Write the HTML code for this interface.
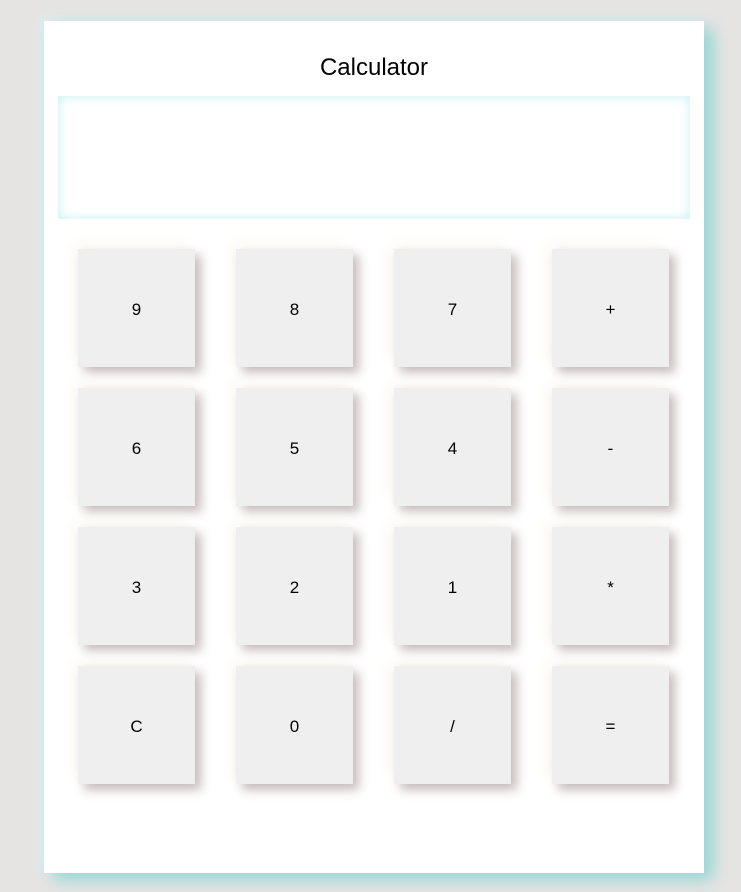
<!DOCTYPE html>
<html><head><meta charset="utf-8"><style>
body{margin:0;width:741px;height:892px;background:#e6e4e3;font-family:"Comic Sans MS","Liberation Sans",sans-serif;overflow:hidden;position:relative}
.card{position:absolute;left:44px;top:21px;width:660px;height:852px;background:#fff;box-shadow:9px 7px 16px #93d6d4,-4px -2px 10px #dcefef}
h1{position:absolute;left:0;right:0;top:31px;margin:0;text-align:center;font-size:24px;font-weight:normal;line-height:32px;color:#000}
.disp{position:absolute;left:14px;top:75px;width:632px;height:123px;background:#fff;box-shadow:inset 0 0 12px #c8f0f5}
.b{position:absolute;width:117px;height:118px;background:#efefef;box-shadow:6px 6px 10px #c7bdbd,-6px -6px 14px #fbf9f3;text-align:center;line-height:122px;font-size:17px;color:#000}
</style></head><body>
<div class="card">
<h1>Calculator</h1>
<div class="disp"></div>
<div class="b" style="left:34px;top:228px">9</div>
<div class="b" style="left:192px;top:228px">8</div>
<div class="b" style="left:350px;top:228px">7</div>
<div class="b" style="left:508px;top:228px">+</div>
<div class="b" style="left:34px;top:367px">6</div>
<div class="b" style="left:192px;top:367px">5</div>
<div class="b" style="left:350px;top:367px">4</div>
<div class="b" style="left:508px;top:367px">-</div>
<div class="b" style="left:34px;top:506px">3</div>
<div class="b" style="left:192px;top:506px">2</div>
<div class="b" style="left:350px;top:506px">1</div>
<div class="b" style="left:508px;top:506px">*</div>
<div class="b" style="left:34px;top:645px">C</div>
<div class="b" style="left:192px;top:645px">0</div>
<div class="b" style="left:350px;top:645px">/</div>
<div class="b" style="left:508px;top:645px">=</div>
</div>
</body></html>
